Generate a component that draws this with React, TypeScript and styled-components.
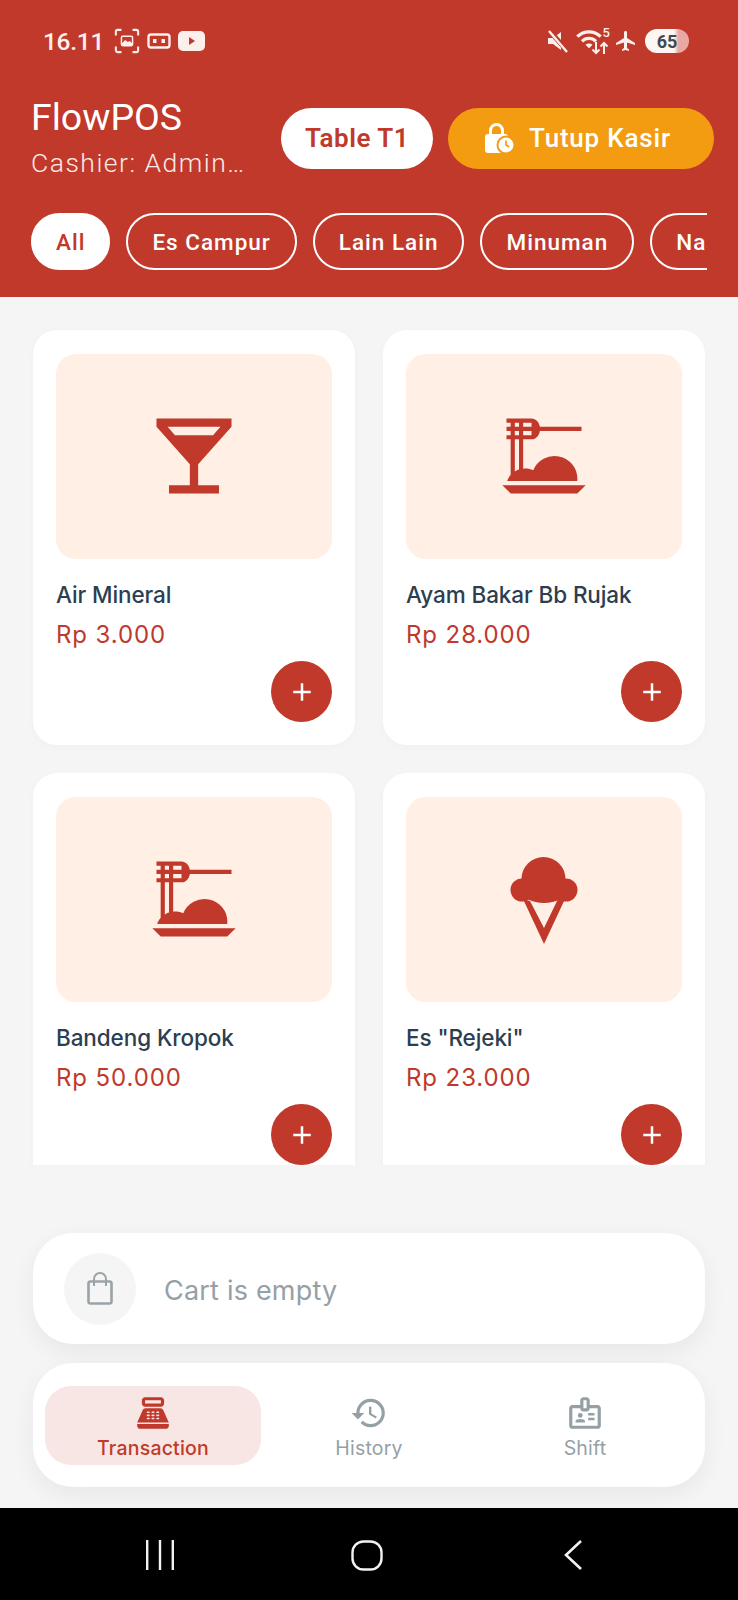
import styled, { createGlobalStyle } from 'styled-components';
import {
  MdAdd,
  MdDinnerDining,
  MdFlight,
  MdHistory,
  MdLocalBar,
  MdOutlineBadge,
  MdPointOfSale,
  MdWifi,
} from 'react-icons/md';
import { IconType } from 'react-icons';

const RED = '#c0392b';
const AMBER = '#f39c12';
const CREAM = '#fdf0ec';

const GlobalStyle = createGlobalStyle`
  html, body {
    margin: 0;
    padding: 0;
    background: #f5f5f5;
  }
  * {
    box-sizing: border-box;
  }
`;

const Page = styled.div`
  width: 738px;
  height: 1600px;
  display: flex;
  flex-direction: column;
  overflow: hidden;
  background: #f5f5f5;
  font-family: Roboto, sans-serif;
`;

const Header = styled.header`
  height: 297px;
  flex: none;
  background: ${RED};
  color: #fff;
  padding: 24px 24px 0 31px;
`;

const StatusBar = styled.div`
  height: 34px;
  display: flex;
  align-items: center;
  padding: 0 1px 0 12px;
`;

const Time = styled.span`
  font-size: 24.5px;
  font-weight: 500;
  letter-spacing: -0.3px;
  color: ${CREAM};
  margin-right: 10px;
`;

const StatusLeft = styled.div`
  display: flex;
  align-items: center;
  gap: 7px;
`;

const StatusRight = styled.div`
  margin-left: auto;
  margin-right: 24px;
  display: flex;
  align-items: center;
  gap: 7px;
  color: ${CREAM};
`;

const WifiWrap = styled.div`
  position: relative;
  width: 36px;
  height: 28px;
  margin: 0 -3px;
`;

const WifiDigit = styled.span`
  position: absolute;
  right: 0;
  top: -1px;
  font-size: 13px;
  font-weight: 500;
  line-height: 13px;
`;

const Battery = styled.div`
  width: 44px;
  height: 24px;
  border-radius: 12px;
  background: linear-gradient(90deg, #fdf6f3 0 66%, #e9a9a2 76% 100%);
  color: #3d4a55;
  font-size: 18px;
  font-weight: 700;
  display: flex;
  align-items: center;
  justify-content: center;
`;

const TopRow = styled.div`
  margin-top: 36px;
  height: 88px;
  display: flex;
  align-items: center;
`;

const Brand = styled.div`
  width: 250px;
  flex: none;
`;

const Title = styled.div`
  font-size: 37.5px;
  line-height: 44px;
`;

const Subtitle = styled.div`
  margin-top: 5px;
  font-size: 26.5px;
  font-weight: 300;
  line-height: 37px;
  letter-spacing: 1.5px;
  color: #fbe9e6;
  white-space: nowrap;
`;

const PillButton = styled.button<{ $tone: 'white' | 'amber' }>`
  height: 61px;
  border: none;
  border-radius: 31px;
  font-family: Roboto, sans-serif;
  font-size: 26px;
  font-weight: ${({ $tone }) => ($tone === 'white' ? 600 : 500)};
  display: flex;
  align-items: center;
  justify-content: center;
  background: ${({ $tone }) => ($tone === 'white' ? '#fff' : AMBER)};
  color: ${({ $tone }) => ($tone === 'white' ? RED : '#fff')};
  width: ${({ $tone }) => ($tone === 'white' ? '152px' : '266px')};
  margin-left: ${({ $tone }) => ($tone === 'white' ? '0' : '15px')};
  padding: 0 ${({ $tone }) => ($tone === 'white' ? '0' : '8px')} 0 0;
  gap: 14px;
  letter-spacing: ${({ $tone }) => ($tone === 'white' ? '0.5px' : '0.8px')};
`;

const Chips = styled.div`
  margin-top: 31px;
  width: 676px;
  display: flex;
  gap: 16px;
  overflow: hidden;
`;

const Chip = styled.div<{ $active?: boolean }>`
  flex: none;
  height: 57px;
  padding: 0 ${({ $active }) => ($active ? '23px' : '24px')};
  border-radius: 29px;
  border: 2px solid #fff;
  background: ${({ $active }) => ($active ? '#fff' : 'transparent')};
  color: ${({ $active }) => ($active ? RED : '#fff')};
  font-size: 22.5px;
  font-weight: 500;
  letter-spacing: 1px;
  display: flex;
  align-items: center;
`;

const Products = styled.main`
  height: 868px;
  flex: none;
  overflow: hidden;
  padding: 33px 33px 0;
  display: grid;
  grid-template-columns: 322px 322px;
  grid-auto-rows: 415px;
  gap: 28px;
`;

const Card = styled.article`
  background: #fff;
  border-radius: 24px;
  padding: 24px 23px;
  box-shadow: 0 2px 8px rgba(0, 0, 0, 0.025);
  display: flex;
  flex-direction: column;
`;

const Thumb = styled.div`
  height: 205px;
  flex: none;
  padding-bottom: 2px;
  border-radius: 20px;
  background: #ffefe4;
  color: ${RED};
  display: flex;
  align-items: center;
  justify-content: center;
`;

const Name = styled.div`
  margin-top: 20px;
  font-family: Inter, sans-serif;
  font-size: 22.5px;
  font-weight: 500;
  line-height: 32px;
  letter-spacing: -0.1px;
  color: #2c3e50;
`;

const Price = styled.div`
  margin-top: 8px;
  font-family: Inter, sans-serif;
  font-size: 24px;
  line-height: 32px;
  font-weight: 400;
  letter-spacing: 0.9px;
  color: ${RED};
`;

const AddButton = styled.button`
  margin-top: 10px;
  align-self: flex-end;
  width: 61px;
  height: 61px;
  flex: none;
  border: none;
  border-radius: 50%;
  background: ${RED};
  color: #fff;
  display: flex;
  align-items: center;
  justify-content: center;
  padding: 0;
`;

const Bottom = styled.div`
  flex: 1;
  padding: 68px 33px 0;
  display: flex;
  flex-direction: column;
  gap: 19px;
`;

const Cart = styled.div`
  height: 111px;
  border-radius: 40px;
  background: #fff;
  box-shadow: 0 8px 24px rgba(0, 0, 0, 0.06);
  padding: 0 31px;
  display: flex;
  align-items: center;
  gap: 28px;
`;

const CartIcon = styled.div`
  width: 72px;
  height: 72px;
  border-radius: 50%;
  background: #f5f5f5;
  display: flex;
  align-items: center;
  justify-content: center;
`;

const CartText = styled.span`
  font-family: Inter, sans-serif;
  font-size: 27px;
  letter-spacing: 0.2px;
  padding-top: 3px;
  color: #95a0a6;
`;

const Nav = styled.nav`
  height: 124px;
  border-radius: 40px;
  background: #fff;
  box-shadow: 0 8px 24px rgba(0, 0, 0, 0.06);
  padding: 23px 12px 22px;
  display: grid;
  grid-template-columns: repeat(3, 1fr);
`;

const Tab = styled.div<{ $active?: boolean }>`
  border-radius: 26px;
  background: ${({ $active }) => ($active ? '#f8e6e4' : 'transparent')};
  color: ${({ $active }) => ($active ? RED : '#95a0a6')};
  font-weight: ${({ $active }) => ($active ? 500 : 400)};
  display: flex;
  flex-direction: column;
  align-items: center;
  justify-content: center;
  gap: 4px;
  padding-top: 2px;
`;

const TabLabel = styled.span`
  font-family: Inter, sans-serif;
  font-size: 19.5px;
  line-height: 24px;
  letter-spacing: 0.2px;
`;

const SystemBar = styled.div`
  height: 92px;
  flex: none;
  padding-top: 2px;
  background: #000;
  display: grid;
  grid-template-columns: 320px 93px 319px;
  align-items: center;
  justify-items: center;
  color: #f2f2f2;
`;

const IcecreamIcon: IconType = () => (
  <svg width="110" height="110" viewBox="-1 3 110 110" fill={RED}>
    <circle cx="53.5" cy="38" r="22" />
    <circle cx="32" cy="49" r="11.5" />
    <circle cx="76" cy="49" r="11.5" />
    <ellipse cx="54" cy="50" rx="22" ry="12" />
    <path d="M33 58L54 103 75 58 68 58 54 87 40 60z" />
  </svg>
);

type Product = { name: string; price: string; icon: IconType };

const products: Product[] = [
  { name: 'Air Mineral', price: 'Rp 3.000', icon: MdLocalBar },
  { name: 'Ayam Bakar Bb Rujak', price: 'Rp 28.000', icon: MdDinnerDining },
  { name: 'Bandeng Kropok', price: 'Rp 50.000', icon: MdDinnerDining },
  { name: 'Es "Rejeki"', price: 'Rp 23.000', icon: IcecreamIcon },
];

const categories = ['Es Campur', 'Lain Lain', 'Minuman', 'Nasi'];

const tabs: { label: string; icon: IconType; active?: boolean }[] = [
  { label: 'Transaction', icon: MdPointOfSale, active: true },
  { label: 'History', icon: MdHistory },
  { label: 'Shift', icon: MdOutlineBadge },
];

const CaptureIcon = () => (
  <svg width="26" height="26" viewBox="0 0 28 28" fill="none" stroke={CREAM} strokeWidth="2.2">
    <path d="M2 8V4a2 2 0 0 1 2-2h4M20 2h4a2 2 0 0 1 2 2v4M26 20v4a2 2 0 0 1-2 2h-4M8 26H4a2 2 0 0 1-2-2v-4" />
    <rect x="8" y="9" width="12" height="10" rx="1.5" strokeWidth="1.6" />
    <path d="M8 17l4-4 3 2 2-1 3 3v2H8z" fill={CREAM} stroke="none" />
  </svg>
);

const TapeIcon = () => (
  <svg width="24" height="18" viewBox="0 0 24 18" fill="none">
    <rect x="1.5" y="2.5" width="21" height="13" rx="2.5" stroke={CREAM} strokeWidth="2.4" />
    <rect x="6" y="7" width="3.5" height="4" fill={CREAM} />
    <rect x="14.5" y="7" width="3.5" height="4" fill={CREAM} />
  </svg>
);

const PlayIcon = () => (
  <svg width="27" height="20" viewBox="0 0 27 20">
    <rect width="27" height="20" rx="5" fill={CREAM} />
    <path d="M11 6l6 4-6 4z" fill={RED} />
  </svg>
);

const MuteIcon = () => (
  <svg width="24" height="24" viewBox="0 0 24 24" fill="none">
    <path d="M2 9h5l8-6v18l-8-6H2z" fill={CREAM} />
    <path d="M3 1l19 22" stroke={RED} strokeWidth="5" />
    <path d="M3 2l18 21" stroke={CREAM} strokeWidth="2.4" />
  </svg>
);

const DataArrows = () => (
  <svg width="20" height="14" viewBox="0 0 20 14" fill="none" stroke={CREAM} strokeWidth="2" style={{ position: 'absolute', right: 0, bottom: 0 }}>
    <path d="M6 1v11M2.5 8.5L6 12l3.5-3.5M14 13V2M10.5 5.5L14 2l3.5 3.5" />
  </svg>
);

const LockClockIcon = () => (
  <svg width="32" height="32" viewBox="0 0 32 32" fill="none">
    <path d="M7.5 14V8.5a6 6 0 0 1 12 0V14" stroke="#fff" strokeWidth="3" />
    <rect x="2" y="12" width="23" height="19" rx="3" fill="#fff" />
    <circle cx="23" cy="23" r="8.5" fill="#fff" stroke={AMBER} strokeWidth="2" />
    <path d="M23 18.5V23l3.2 2" stroke={AMBER} strokeWidth="1.7" />
  </svg>
);

const BagIcon = () => (
  <svg width="36" height="36" viewBox="0 0 36 36" fill="none" stroke="#9aa3a8">
    <rect x="6.5" y="10.5" width="23" height="22" rx="2" strokeWidth="2.6" />
    <path d="M12 15V8a6 6 0 0 1 12 0v7" strokeWidth="2" />
  </svg>
);

const NavHome = () => (
  <svg width="32" height="31" viewBox="0 0 32 31" fill="none" stroke="#f2f2f2" strokeWidth="2.4">
    <rect x="1.5" y="1.5" width="29" height="28" rx="11" />
  </svg>
);

const NavRecents = () => (
  <svg width="30" height="30" viewBox="0 0 30 30" fill="#f2f2f2">
    <rect x="1" y="0" width="2.4" height="30" />
    <rect x="13.8" y="0" width="2.4" height="30" />
    <rect x="26.6" y="0" width="2.4" height="30" />
  </svg>
);

const NavBack = () => (
  <svg width="20" height="32" viewBox="0 0 20 32" fill="none" stroke="#f2f2f2" strokeWidth="2.6">
    <path d="M18 2L3 16l15 14" />
  </svg>
);

export default function App() {
  return (
    <Page>
      <GlobalStyle />
      <Header>
        <StatusBar>
          <Time>16.11</Time>
          <StatusLeft>
            <CaptureIcon />
            <TapeIcon />
            <PlayIcon />
          </StatusLeft>
          <StatusRight>
            <MuteIcon />
            <WifiWrap>
              <MdWifi size={28} style={{ position: 'absolute', left: 1, top: -2 }} />
              <WifiDigit>5</WifiDigit>
              <DataArrows />
            </WifiWrap>
            <MdFlight size={24} />
            <Battery>65</Battery>
          </StatusRight>
        </StatusBar>
        <TopRow>
          <Brand>
            <Title>FlowPOS</Title>
            <Subtitle>Cashier: Admin…</Subtitle>
          </Brand>
          <PillButton $tone="white">Table T1</PillButton>
          <PillButton $tone="amber">
            <LockClockIcon />
            Tutup Kasir
          </PillButton>
        </TopRow>
        <Chips>
          <Chip $active>All</Chip>
          {categories.map((c) => (
            <Chip key={c}>{c}</Chip>
          ))}
        </Chips>
      </Header>
      <Products>
        {products.map(({ name, price, icon: Icon }) => (
          <Card key={name}>
            <Thumb>
              <Icon size={100} />
            </Thumb>
            <Name>{name}</Name>
            <Price>{price}</Price>
            <AddButton aria-label={`Add ${name}`}>
              <MdAdd size={30} />
            </AddButton>
          </Card>
        ))}
      </Products>
      <Bottom>
        <Cart>
          <CartIcon>
            <BagIcon />
          </CartIcon>
          <CartText>Cart is empty</CartText>
        </Cart>
        <Nav>
          {tabs.map(({ label, icon: Icon, active }) => (
            <Tab key={label} $active={active}>
              <Icon size={38} />
              <TabLabel>{label}</TabLabel>
            </Tab>
          ))}
        </Nav>
      </Bottom>
      <SystemBar>
        <NavRecents />
        <NavHome />
        <NavBack />
      </SystemBar>
    </Page>
  );
}
